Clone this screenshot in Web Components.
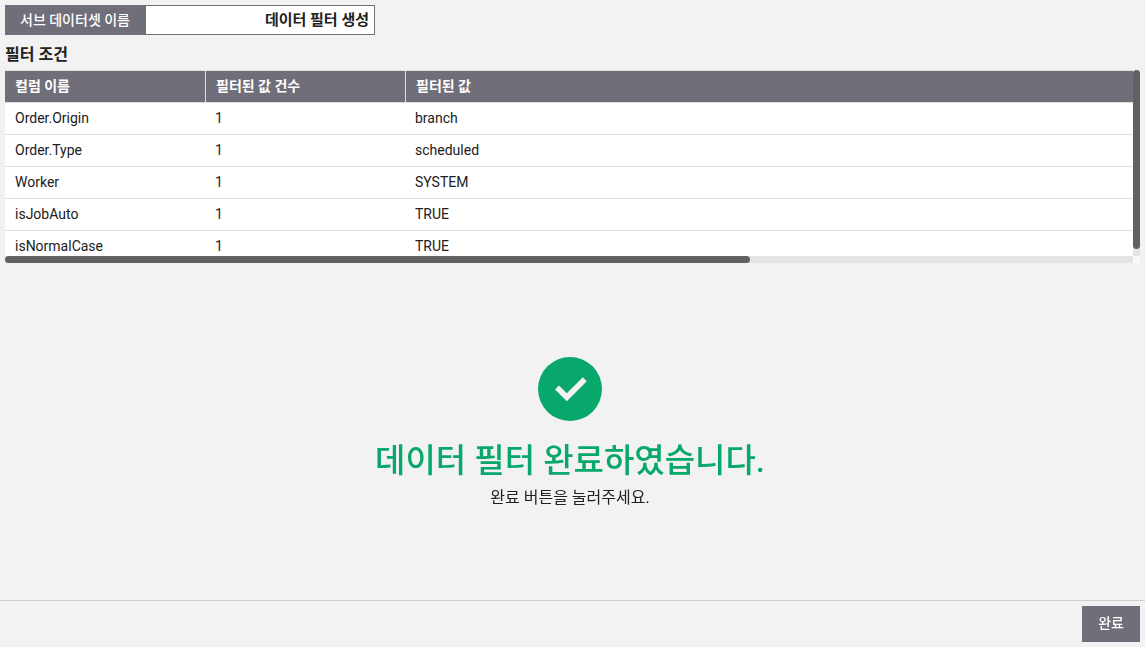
<!DOCTYPE html>
<html lang="ko">
<head>
<meta charset="utf-8">
<title>데이터 필터</title>
<style>
html, body { margin: 0; height: 100%; }
body { background: #f2f2f2; color: #212121; font: 14px/20px Roboto, "Noto Sans CJK KR", sans-serif; }
</style>
</head>
<body>
<filter-page>
  <dataset-name slot="top" label="서브 데이터셋 이름" value="데이터 필터 생성"></dataset-name>
  <filter-table slot="top" heading="필터 조건"></filter-table>
  <result-message>
    <span slot="title">데이터 필터 완료하였습니다.</span>
    <span slot="hint">완료 버튼을 눌러주세요.</span>
  </result-message>
  <action-button slot="footer">완료</action-button>
</filter-page>
<script>
class BaseElement extends HTMLElement {
  constructor() {
    super();
    this.attachShadow({ mode: "open" });
  }
  render(html) { this.shadowRoot.innerHTML = html; }
}

customElements.define("filter-page", class extends BaseElement {
  connectedCallback() {
    this.render(`
      <style>
        :host { display: flex; flex-direction: column; min-height: 100vh; }
        header { padding: 5px 5px 0; }
        main { flex: 1; display: flex; align-items: center; justify-content: center; padding-right: 5px; }
        footer { display: flex; justify-content: flex-end; padding: 5px; border-top: 1px solid #cfcfd1; }
      </style>
      <header><slot name="top"></slot></header>
      <main><slot></slot></main>
      <footer><slot name="footer"></slot></footer>`);
  }
});

customElements.define("dataset-name", class extends BaseElement {
  connectedCallback() {
    this.render(`
      <style>
        :host { display: flex; max-width: 370px; height: 30px; box-sizing: border-box; border: 1px solid #6f6e79; }
        label { padding: 4px 16px 4px 14px; background: #6f6e79; color: #fff; font-size: 14px; line-height: 20px; font-weight: 500; white-space: nowrap; }
        input { flex: 1; min-width: 0; box-sizing: border-box; border: 0; padding: 0 5px; background: #fff; color: #212121;
                font: inherit; font-size: 15px; font-weight: 700; text-align: right; }
      </style>
      <label for="name">${this.getAttribute("label")}</label>
      <input id="name" type="text" value="${this.getAttribute("value")}">`);
  }
});

/* A scrolling area with slim bars whose thumbs follow the content's size. */
customElements.define("slim-scroll", class extends BaseElement {
  connectedCallback() {
    this.render(`
      <style>
        :host { display: grid; grid-template: minmax(0, 1fr) 7px / minmax(0, 1fr) 7px; }
        .view { overflow: auto; scrollbar-width: none; background: #fff; }
        .bar { background: #e4e4e4; }
        .thumb { width: 7px; height: 7px; background: #616161; border-radius: 4px; }
        .corner { background: #fafafa; }
      </style>
      <div class="view" tabindex="0"><slot></slot></div>
      <div class="bar"><div class="thumb" id="y"></div></div>
      <div class="bar"><div class="thumb" id="x"></div></div>
      <div class="corner"></div>`);
    this.view = this.shadowRoot.querySelector(".view");
    this.view.addEventListener("scroll", () => this.update());
    new ResizeObserver(() => this.update()).observe(this.view);
    this.update();
  }
  update() {
    const v = this.view;
    const x = this.shadowRoot.getElementById("x");
    const y = this.shadowRoot.getElementById("y");
    x.style.width = `${Math.round(v.clientWidth * v.clientWidth / v.scrollWidth)}px`;
    x.style.marginLeft = `${Math.round(v.scrollLeft * v.clientWidth / v.scrollWidth)}px`;
    y.style.height = `${Math.round(v.clientHeight * v.clientHeight / v.scrollHeight)}px`;
    y.style.marginTop = `${Math.round(v.scrollTop * v.clientHeight / v.scrollHeight)}px`;
  }
});

customElements.define("filter-table", class extends BaseElement {
  connectedCallback() {
    const rows = [
      ["Order.Origin", 1, "branch"],
      ["Order.Type", 1, "scheduled"],
      ["Worker", 1, "SYSTEM"],
      ["isJobAuto", 1, "TRUE"],
      ["isNormalCase", 1, "TRUE"]
    ];
    this.render(`
      <style>
        :host { display: block; }
        h2 { margin: 0; padding: 8px 0 3px; font-size: 16px; line-height: 24px; font-weight: 700; }
        slim-scroll { height: 193px; }
        table { width: 1708px; table-layout: fixed; border-collapse: separate; border-spacing: 0; border-top: 1px solid #e0e0e0; }
        col.fixed { width: 200px; }
        th, td { box-sizing: border-box; height: 32px; padding: 0 10px 2px; border-bottom: 1px solid #e0e0e0; text-align: left; white-space: nowrap; line-height: 20px; }
        th { background: #6f6e79; color: #fff; font-weight: 700; }
        th + th { border-left: 1px solid #e0e0e0; }
      </style>
      <h2 id="heading">${this.getAttribute("heading")}</h2>
      <slim-scroll>
        <table aria-labelledby="heading">
          <colgroup><col class="fixed"><col class="fixed"><col></colgroup>
          <thead><tr><th>컬럼 이름</th><th>필터된 값 건수</th><th>필터된 값</th></tr></thead>
          <tbody>${rows.map(r => `<tr>${r.map(c => `<td>${c}</td>`).join("")}</tr>`).join("")}</tbody>
        </table>
      </slim-scroll>`);
  }
});

customElements.define("result-message", class extends BaseElement {
  connectedCallback() {
    this.render(`
      <style>
        :host { display: flex; flex-direction: column; align-items: center; text-align: center; padding-top: 3px; }
        svg { width: 64px; height: 64px; }
        h1 { margin: 15px 0 0; color: #08a76b; font-size: 33px; line-height: 50px; font-weight: 500; }
        p { margin: 0; font-size: 16px; line-height: 24px; }
      </style>
      <svg viewBox="0 0 64 64" aria-hidden="true">
        <circle cx="32" cy="32" r="32" fill="#08a76b"/>
        <path d="M17 32.6l4-4 7.8 7.7 16-16 4 4L28.8 44.2z" fill="#f2f2f2"/>
      </svg>
      <h1><slot name="title"></slot></h1>
      <p><slot name="hint"></slot></p>`);
  }
});

customElements.define("action-button", class extends BaseElement {
  connectedCallback() {
    this.render(`
      <style>
        :host { display: block; }
        button { display: block; border: 0; padding: 7px 16px 9px; background: #6f6e79; color: #fff; font: inherit; font-weight: 500; cursor: pointer; }
      </style>
      <button type="button"><slot></slot></button>`);
  }
});
</script>
</body>
</html>
